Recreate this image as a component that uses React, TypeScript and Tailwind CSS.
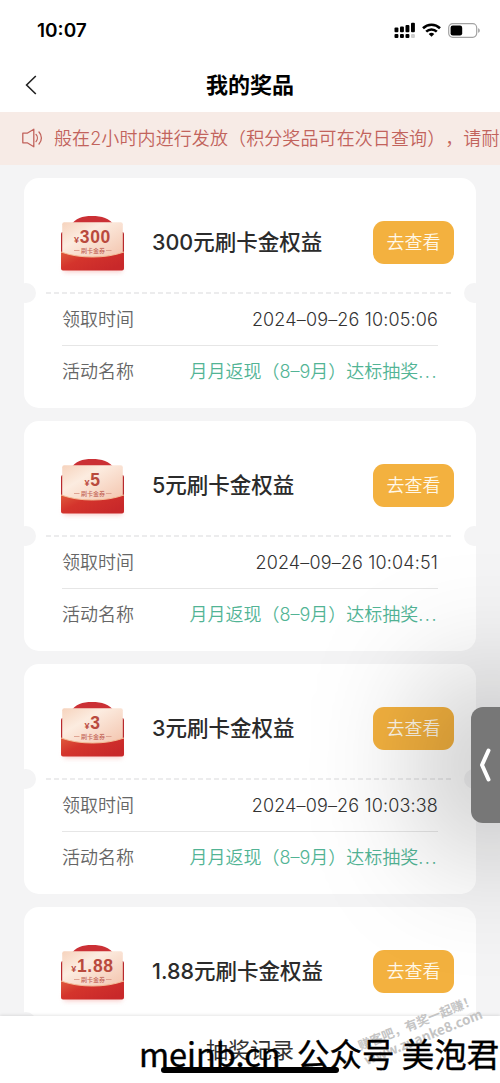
interface prize {
    id: number,
    amount: string,
    receivedAt?: string,
    activity?: string
}

type props = {
    prize: prize
}

const prizes: prize[] = [
    { id: 1, amount: '300', receivedAt: '2024–09–26 10:05:06', activity: '月月返现（8–9月）达标抽奖' },
    { id: 2, amount: '5', receivedAt: '2024–09–26 10:04:51', activity: '月月返现（8–9月）达标抽奖' },
    { id: 3, amount: '3', receivedAt: '2024–09–26 10:03:38', activity: '月月返现（8–9月）达标抽奖' },
    { id: 4, amount: '1.88' }
]

const StatusBar = () => {
    return (
        <div className="flex h-[60px] shrink-0 items-center justify-between bg-white pl-[37px] pr-[20px]">
            <span className="text-[19px] leading-none font-semibold text-black">10:07</span>
            <div className="flex items-center gap-[7px]">
                <svg width="21" height="17" viewBox="0 0 21 17" fill="#000">
                    <rect x="0.5" y="5.5" width="3.9" height="4.8" rx="1" />
                    <rect x="6" y="4.5" width="3.9" height="5.8" rx="1" />
                    <rect x="11.5" y="3" width="3.9" height="7.3" rx="1" />
                    <rect x="17" y="0.8" width="3.9" height="9.5" rx="1" />
                    <rect x="0.5" y="12" width="3.9" height="4" rx="1" />
                    <rect x="6" y="12" width="3.9" height="4" rx="1" />
                    <rect x="11.5" y="12" width="3.9" height="4" rx="1" />
                    <rect x="17" y="12" width="3.9" height="4" rx="1" fill="#ccc" />
                </svg>
                <svg width="19" height="14" viewBox="0 0 19 14" fill="none" stroke="#000" strokeWidth="2.6">
                    <path d="M1 5.2a12.2 12.2 0 0 1 17 0" />
                    <path d="M4.2 8.6a7.6 7.6 0 0 1 10.6 0" />
                    <path d="M9.5 13.8 6.7 11a4 4 0 0 1 5.6 0Z" fill="#000" stroke="none" />
                </svg>
                <svg width="32" height="15" viewBox="0 0 32 15">
                    <rect x="0.7" y="0.7" width="28" height="13.6" rx="4" fill="none" stroke="#a3a3a3" strokeWidth="1.2" />
                    <rect x="2.6" y="2.5" width="11.6" height="10" rx="2.2" fill="#000" />
                    <path d="M30.3 5.2c1.8.6 1.8 4 0 4.6Z" fill="#8a8a8a" />
                </svg>
            </div>
        </div>
    )
}

const NavBar = () => {
    return (
        <div className="grid h-[52px] shrink-0 grid-cols-3 items-center bg-white pb-0.5">
            <svg className="ml-[25px]" width="12" height="20" viewBox="0 0 12 20" fill="none" stroke="#222" strokeWidth="1.6">
                <path d="M10.8 1 1.6 10l9.2 9" />
            </svg>
            <h1 className="text-center text-[22px] leading-none font-bold text-black">我的奖品</h1>
        </div>
    )
}

const Notice = () => {
    return (
        <div className="flex h-[53px] shrink-0 items-center overflow-hidden bg-[#f7ebe6] pl-[22px] text-[#c2635c]">
            <svg className="mb-0.5 shrink-0" width="21" height="20" viewBox="0 0 21 20" fill="none" stroke="currentColor" strokeWidth="1.3" strokeLinejoin="round">
                <path d="M.8 5.2h4.4l6.6-4v17.6l-6.6-4H.8Z" />
                <path d="M14 6.4c1.8 2 1.8 5.2 0 7.2M17 4c3.2 3.4 3.2 8.6 0 12" strokeLinecap="round" />
            </svg>
            <p className="ml-[11px] text-lg font-[350] tracking-[0.1px] whitespace-nowrap">般在2小时内进行发放（积分奖品可在次日查询），请耐</p>
        </div>
    )
}

// red envelope with the coupon slipped in, the amount is printed on the coupon
const Coupon = ({ amount }: { amount: string }) => {
    return (
        <svg className="mt-[9px] shrink-0" width="72" height="66" viewBox="0 0 72 66">
            <defs>
                <linearGradient id="paper" x1="0" y1="0" x2="1" y2="1">
                    <stop offset="0" stopColor="#f6d3bd" />
                    <stop offset="0.35" stopColor="#fcece0" />
                    <stop offset="1" stopColor="#f3c3ac" />
                </linearGradient>
                <linearGradient id="pocket" x1="0" y1="0" x2="1" y2="0.6">
                    <stop offset="0" stopColor="#df5a3c" />
                    <stop offset="0.4" stopColor="#d4342c" />
                    <stop offset="1" stopColor="#c8282a" />
                </linearGradient>
                <filter id="soft" x="-20%" y="-80%" width="140%" height="260%">
                    <feGaussianBlur stdDeviation="2.5" />
                </filter>
            </defs>
            <rect x="8" y="50" width="58" height="8" fill="#f3a7a3" opacity="0.6" filter="url(#soft)" />
            <path d="M14 12C20 4 26 2 36 2s17 2 23 10Z" fill="#cb3035" />
            <rect x="5" y="18" width="63" height="30" rx="2" fill="#b8292d" />
            <rect x="6.2" y="8.3" width="60.6" height="36" rx="2" fill="url(#paper)" />
            <path d="M5 38c10 3.5 20 5 31.5 5S58 41.5 68 38v16.500a2 2 0 0 1-2 2H7a2 2 0 0 1-2-2Z" fill="url(#pocket)" />
            <path d="M5 38c10 3.5 20 5 31.5 5S58 41.5 68 38" fill="none" stroke="#f3bd98" strokeWidth="1" />
            <text x="36.5" y="29" textAnchor="middle" fill="#b94a3d" fontFamily="Liberation Sans" fontWeight="700" fontSize="17.5" letterSpacing="0.7">
                <tspan fontSize="9">¥</tspan>{amount}
            </text>
            <text x="37" y="38.5" textAnchor="middle" fill="#c4665a" fontWeight="500" fontSize="6">刷卡金券</text>
            <path d="M18 36.500h5.500M50 36.500h5.500" stroke="#d89584" strokeWidth="0.8" />
        </svg>
    )
}

const PrizeCard = ({ prize }: props) => {
    return (
        <div className="relative h-[229.5px] shrink-0 overflow-hidden rounded-[15px] bg-white">
            <div className="flex h-[114px] items-center pt-[14px] pr-[22px] pl-8">
                <Coupon amount={prize.amount} />
                <h3 className="ml-6 flex-1 pt-0.5 text-[21.5px] leading-none font-medium whitespace-nowrap text-[#2b2b2b]">{prize.amount}元刷卡金权益</h3>
                <button className="h-[43px] w-[81px] rounded-[11px] bg-[#f3b13f] pt-0.5 text-lg leading-none font-[350] text-[#fff8e8]">去查看</button>
            </div>
            <svg className="mx-[22px] block" width="408" height="2">
                <path d="M0 1h408" stroke="#e6e6e8" strokeWidth="1.5" strokeDasharray="5 3" />
            </svg>
            <span className="absolute top-[105px] -left-2 size-5 rounded-full bg-[#f4f4f5]" />
            <span className="absolute top-[105px] -right-2 size-5 rounded-full bg-[#f4f4f5]" />
            {prize.receivedAt && (
                <div className="mx-[38px] flex h-[52px] items-center justify-between border-b border-[#e6e6e6] text-lg font-[350]">
                    <span className="text-[#666]">领取时间</span>
                    <span className="tracking-[0.15px] text-[#333]">{prize.receivedAt}</span>
                </div>
            )}
            {prize.activity && (
                <div className="mx-[38px] flex h-[51px] items-center justify-between text-lg font-[350]">
                    <span className="text-[#666]">活动名称</span>
                    <span className="text-[#52b495]">{prize.activity}<span className="tracking-[1.5px]">...</span></span>
                </div>
            )}
        </div>
    )
}

const SideHandle = () => {
    return (
        <div className="absolute top-[707px] -right-3 flex h-[116px] w-[41px] items-center rounded-[12px] bg-[#777] pl-2 shadow-[0_0_130px_24px_rgba(0,0,0,0.38)]">
            <svg width="12" height="34" viewBox="0 0 12 34" fill="none" stroke="#fff" strokeWidth="4" strokeLinecap="round" strokeLinejoin="round">
                <path d="M9.5 2.5 3 17l6.5 14.5" />
            </svg>
        </div>
    )
}

export default function App() {
    return (
        <div className="relative flex h-[1083px] w-[500px] flex-col overflow-hidden bg-[#f4f4f5] font-[Inter,'Noto_Sans_CJK_SC',sans-serif] [text-spacing-trim:space-all]">
            <StatusBar />
            <NavBar />
            <Notice />
            <div className="flex flex-col gap-[13.5px] px-6 pt-[13px]">
                {prizes.map(prize => <PrizeCard prize={prize} key={prize.id} />)}
            </div>
            <SideHandle />
            <div className="absolute inset-x-0 bottom-0 flex h-[67px] justify-center bg-white pt-[23px] shadow-[0_-1px_3px_rgba(0,0,0,0.1)]">
                <span className="text-[22px] leading-none text-[#333]">抽奖记录</span>
            </div>
            <div className="absolute top-[1014px] left-[357px] w-[124px] -rotate-[22deg] font-['Noto_Sans_CJK_SC',sans-serif] whitespace-nowrap text-[#c4c4c4]">
                <p className="text-[12.5px] leading-[16px] font-bold">赚客吧，有奖一起赚！</p>
                <p className="text-[13.5px] leading-[15px] font-bold">www.zuanke8.com</p>
            </div>
            <div className="absolute bottom-[10px] left-[161px] h-[6px] w-[178px] rounded-full bg-black" />
            <p className="absolute top-[1037px] left-[139px] flex font-['Noto_Sans_CJK_SC',sans-serif] text-[32.5px] leading-8 whitespace-nowrap text-black [-webkit-text-stroke:0.4px_#000]">
                <span className="w-[158px]">meinb.cn</span>
                <span>公众号 美泡君</span>
            </p>
        </div>
    )
}
